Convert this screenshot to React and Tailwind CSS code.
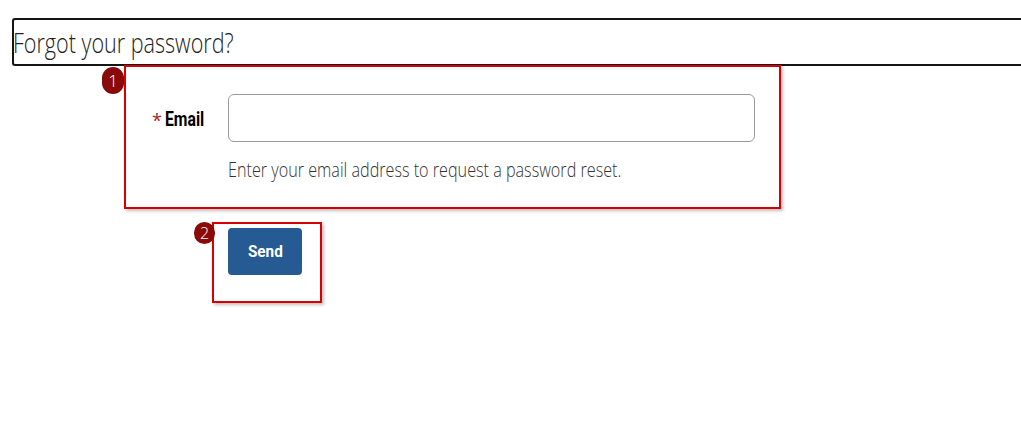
export default function App() {
  return (
    <div className="w-[1021px] h-[429px] bg-white overflow-hidden" style={{ fontFamily: '"Open Sans", "Noto Sans", sans-serif' }}>
      <div className="pt-[18px] pl-[12px]">
        <div className="h-[48px] border-2 border-r-0 border-[#151515] rounded-l-[3px] flex items-center">
          <h1 className="text-[28px] font-light text-[#222] leading-none -ml-[1px] -mt-[1px] whitespace-nowrap origin-left scale-x-[0.77]">Forgot your password?</h1>
        </div>
      </div>
      <div className="ml-[124px] -mt-[1px] relative w-[657px] h-[144px] border-2 border-[#d80000] shadow-[2px_2px_3px_rgba(0,0,0,0.25)] flex flex-col pt-[27px] pl-[26px] pr-[24px]">
        <div className="absolute -left-[24px] top-[0px] w-[22px] h-[27px] rounded-full bg-[#8a0a0a] text-white text-[17px] font-light flex items-center justify-center leading-none">1</div>
        <div className="flex items-center">
          <div className="w-[76px] shrink-0 flex items-center mt-[3px]">
            <span className="text-[#b22222] mr-[3px] text-[18px] leading-none">*</span>
            <span className="font-bold text-black text-[21px] leading-none whitespace-nowrap origin-left scale-x-[0.75] inline-block" style={{ fontFamily: 'Roboto, sans-serif' }}>Email</span>
          </div>
          <div className="w-[527px] h-[48px] border border-[#9a9a9a] rounded-[6px] bg-white"></div>
        </div>
        <div className="pl-[76px] mt-[15px] leading-[24px]">
          <div className="text-[21px] font-light text-[#333] whitespace-nowrap origin-left scale-x-[0.77]">Enter your email address to request a password reset.</div>
        </div>
      </div>
      <div className="ml-[212px] mt-[13px] relative w-[110px] h-[81px] border-2 border-[#d80000] shadow-[2px_2px_3px_rgba(0,0,0,0.25)] pt-[4px] pl-[14px]">
        <div className="absolute -left-[20px] -top-[2px] w-[21px] h-[22px] rounded-full bg-[#8a0a0a] text-white text-[16px] font-light flex items-center justify-center leading-none">2</div>
        <button className="w-[74px] h-[47px] rounded-[4px] bg-[#265a92] text-white flex items-center justify-center" style={{ fontFamily: 'Roboto, sans-serif' }}>
          <span className="text-[17px] font-bold inline-block scale-x-[0.9] leading-none">Send</span>
        </button>
      </div>
    </div>
  );
}
